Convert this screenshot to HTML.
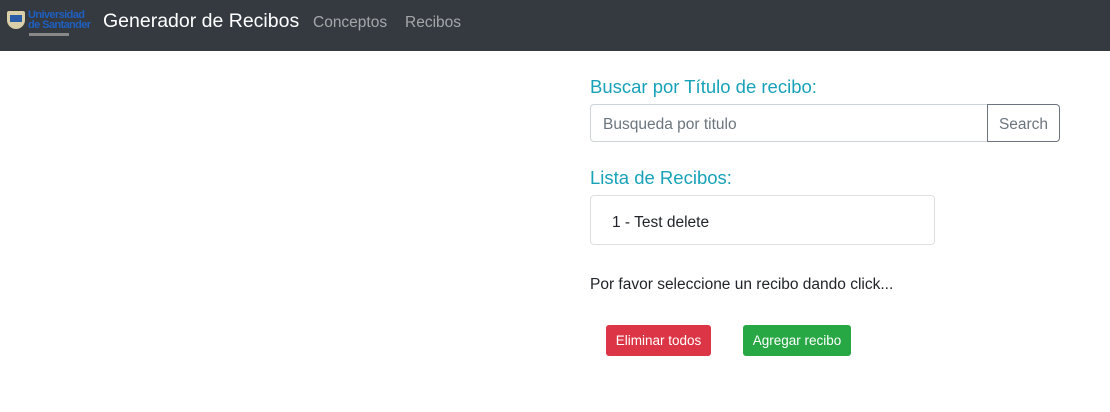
<!DOCTYPE html>
<html><head><meta charset="utf-8"><style>
*{box-sizing:border-box;margin:0;padding:0}
body{width:1110px;height:412px;background:#fff;font-family:"Liberation Sans",sans-serif;position:relative;overflow:hidden}
.nav{position:absolute;left:0;top:0;width:1110px;height:51px;background:#343a40}
.brand{position:absolute;left:103px;top:10px;color:#fff;font-size:19.5px}
.link{position:absolute;top:14px;color:rgba(255,255,255,.55);font-size:15.5px}
.logo{position:absolute;left:7px;top:9px;width:88px;height:30px}
.h{position:absolute;left:590px;color:#17a2b8;font-size:18.5px}
.inp{position:absolute;left:590px;top:104px;width:398px;height:38px;border:1px solid #ced4da;border-radius:4px 0 0 4px;color:#6c757d;font-size:15.5px;padding:11px 0 0 12px}
.btn{position:absolute;left:987px;top:104px;width:73px;height:38px;border:1px solid #6c757d;border-radius:0 4px 4px 0;color:#6c757d;font-size:15.5px;text-align:center;padding-top:11px}
.item{position:absolute;left:590px;top:195px;width:345px;height:50px;border:1px solid #dfdfdf;border-radius:4px;font-size:15.5px;color:#212529;padding:18px 0 0 21px}
.p{position:absolute;left:590px;top:276px;font-size:15.5px;color:#212529}
.b{position:absolute;top:325px;height:31px;color:#fff;font-size:13.5px;border-radius:3px;text-align:center;padding-top:8px}
</style></head><body>
<div class="nav">
<div class="logo">
<div style="position:absolute;left:0;top:2px;width:18px;height:18px;background:#d9cfa8;border-radius:2px 2px 9px 9px"></div>
<div style="position:absolute;left:3px;top:6px;width:12px;height:7px;background:#2a5da8"></div>
<div style="position:absolute;left:21px;top:1px;white-space:nowrap;color:#1f5fc0;font-weight:bold;font-size:11px;line-height:10px;font-family:'Liberation Sans',sans-serif;letter-spacing:-0.6px">Universidad<br>de Santander</div>
<div style="position:absolute;left:22px;top:24px;width:40px;height:3px;background:#888"></div>
</div>
<div class="brand">Generador de Recibos</div>
<div class="link" style="left:313px">Conceptos</div>
<div class="link" style="left:405px">Recibos</div>
</div>
<div class="h" style="top:76px">Buscar por Título de recibo:</div>
<div class="inp">Busqueda por titulo</div>
<div class="btn">Search</div>
<div class="h" style="top:167px">Lista de Recibos:</div>
<div class="item">1 - Test delete</div>
<div class="p">Por favor seleccione un recibo dando click...</div>
<div class="b" style="left:606px;width:105px;background:#dc3545">Eliminar todos</div>
<div class="b" style="left:743px;width:108px;background:#28a745">Agregar recibo</div>
</body></html>
